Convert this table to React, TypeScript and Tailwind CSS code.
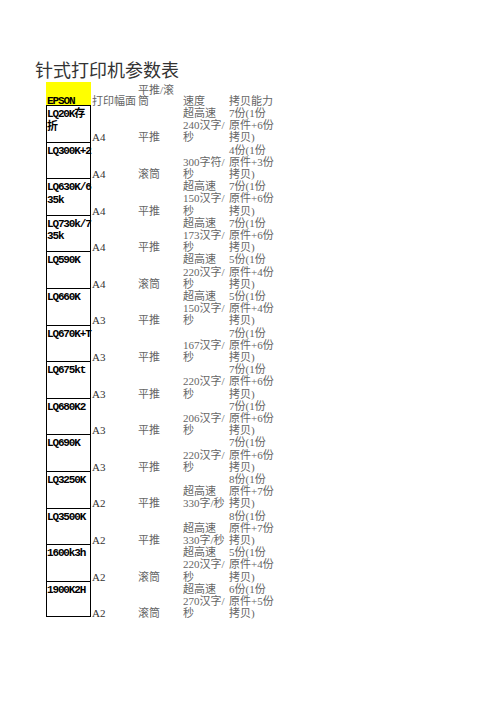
const cjk = { fontFamily: '"Liberation Serif", "Noto Sans CJK SC", serif' };
const mono = { fontFamily: '"Liberation Mono", "Noto Sans CJK SC", monospace' };

type Row = { name: string[]; size: string; feed: string; speed: string[]; copy: string[] };

const copy = (n: number) => [`${n}份(1份`, `原件+${n - 1}份`, "拷贝)"];

const rows: Row[] = [
  { name: ["LQ20K存", "折"], size: "A4", feed: "平推", speed: ["超高速", "240汉字/", "秒"], copy: copy(7) },
  { name: ["LQ300K+2"], size: "A4", feed: "滚筒", speed: ["300字符/", "秒"], copy: copy(4) },
  { name: ["LQ630K/6", "35k"], size: "A4", feed: "平推", speed: ["超高速", "150汉字/", "秒"], copy: copy(7) },
  { name: ["LQ730k/7", "35k"], size: "A4", feed: "平推", speed: ["超高速", "173汉字/", "秒"], copy: copy(7) },
  { name: ["LQ590K"], size: "A4", feed: "滚筒", speed: ["超高速", "220汉字/", "秒"], copy: copy(5) },
  { name: ["LQ660K"], size: "A3", feed: "平推", speed: ["超高速", "150汉字/", "秒"], copy: copy(5) },
  { name: ["LQ670K+T"], size: "A3", feed: "平推", speed: ["167汉字/", "秒"], copy: copy(7) },
  { name: ["LQ675kt"], size: "A3", feed: "平推", speed: ["220汉字/", "秒"], copy: copy(7) },
  { name: ["LQ680K2"], size: "A3", feed: "平推", speed: ["206汉字/", "秒"], copy: copy(7) },
  { name: ["LQ690K"], size: "A3", feed: "平推", speed: ["220汉字/", "秒"], copy: copy(7) },
  { name: ["LQ3250K"], size: "A2", feed: "平推", speed: ["超高速", "330字/秒"], copy: copy(8) },
  { name: ["LQ3500K"], size: "A2", feed: "平推", speed: ["超高速", "330字/秒"], copy: copy(8) },
  { name: ["1600k3h"], size: "A2", feed: "滚筒", speed: ["超高速", "220汉字/", "秒"], copy: copy(5) },
  { name: ["1900K2H"], size: "A2", feed: "滚筒", speed: ["超高速", "270汉字/", "秒"], copy: copy(6) },
];

// cell text sits on the bottom edge, like a spreadsheet
function Lines({ lines, className = "", shift = "-mb-[2px]" }: { lines: string[]; className?: string; shift?: string }) {
  return (
    <div className={`flex flex-col justify-end pl-px ${className}`} style={cjk}>
      <div className={shift}>
        {lines.map((l, i) => (
          <div key={i} className="whitespace-nowrap">{l}</div>
        ))}
      </div>
    </div>
  );
}

export default function App() {
  return (
    <div className="min-h-[702px] w-[496px] bg-white pt-[60px] text-[11px] leading-[12.2px] text-[#666]">
      <h1 className="pl-[35px] text-[18px] leading-[22px] text-[#333]" style={cjk}>
        针式打印机参数表
      </h1>

      <div className="ml-[46px] grid w-[228px] grid-cols-[45px_46px_45px_46px_46px]">
        {/* header */}
        <div className="flex h-[23px] flex-col justify-end bg-[#ffff00] pl-px">
          <div
            className="-mb-[2px] text-[11px] font-bold leading-[11.5px] tracking-[-1.1px] text-black"
            style={mono}
          >
            EPSON
          </div>
        </div>
        <Lines lines={["打印幅面"]} className="h-[23px] leading-[11px]" shift="-mb-[2px]" />
        <Lines lines={["平推/滚", "筒"]} className="h-[23px] leading-[11px]" shift="-mb-[2px]" />
        <Lines lines={["速度"]} className="h-[23px] leading-[11px]" shift="-mb-[2px]" />
        <Lines lines={["拷贝能力"]} className="h-[23px] leading-[11px]" shift="-mb-[2px]" />

        {rows.map((r, i) => (
          <div key={r.name.join("")} className="contents">
            <div
              className={`h-[36.6px] border-x border-t border-black pt-[2px] text-[11px] font-bold leading-[12.5px] tracking-[-1.15px] text-black ${
                i === rows.length - 1 ? "border-b" : ""
              }`}
              style={mono}
            >
              {r.name.map((n) => (
                <div key={n} className="whitespace-nowrap">{n}</div>
              ))}
            </div>
            <Lines lines={[r.size]} className="h-[36.6px] text-[#333]" />
            <Lines lines={[r.feed]} className="h-[36.6px]" />
            <Lines lines={r.speed} className="h-[36.6px]" />
            <Lines lines={r.copy} className="h-[36.6px]" />
          </div>
        ))}
      </div>
    </div>
  );
}
